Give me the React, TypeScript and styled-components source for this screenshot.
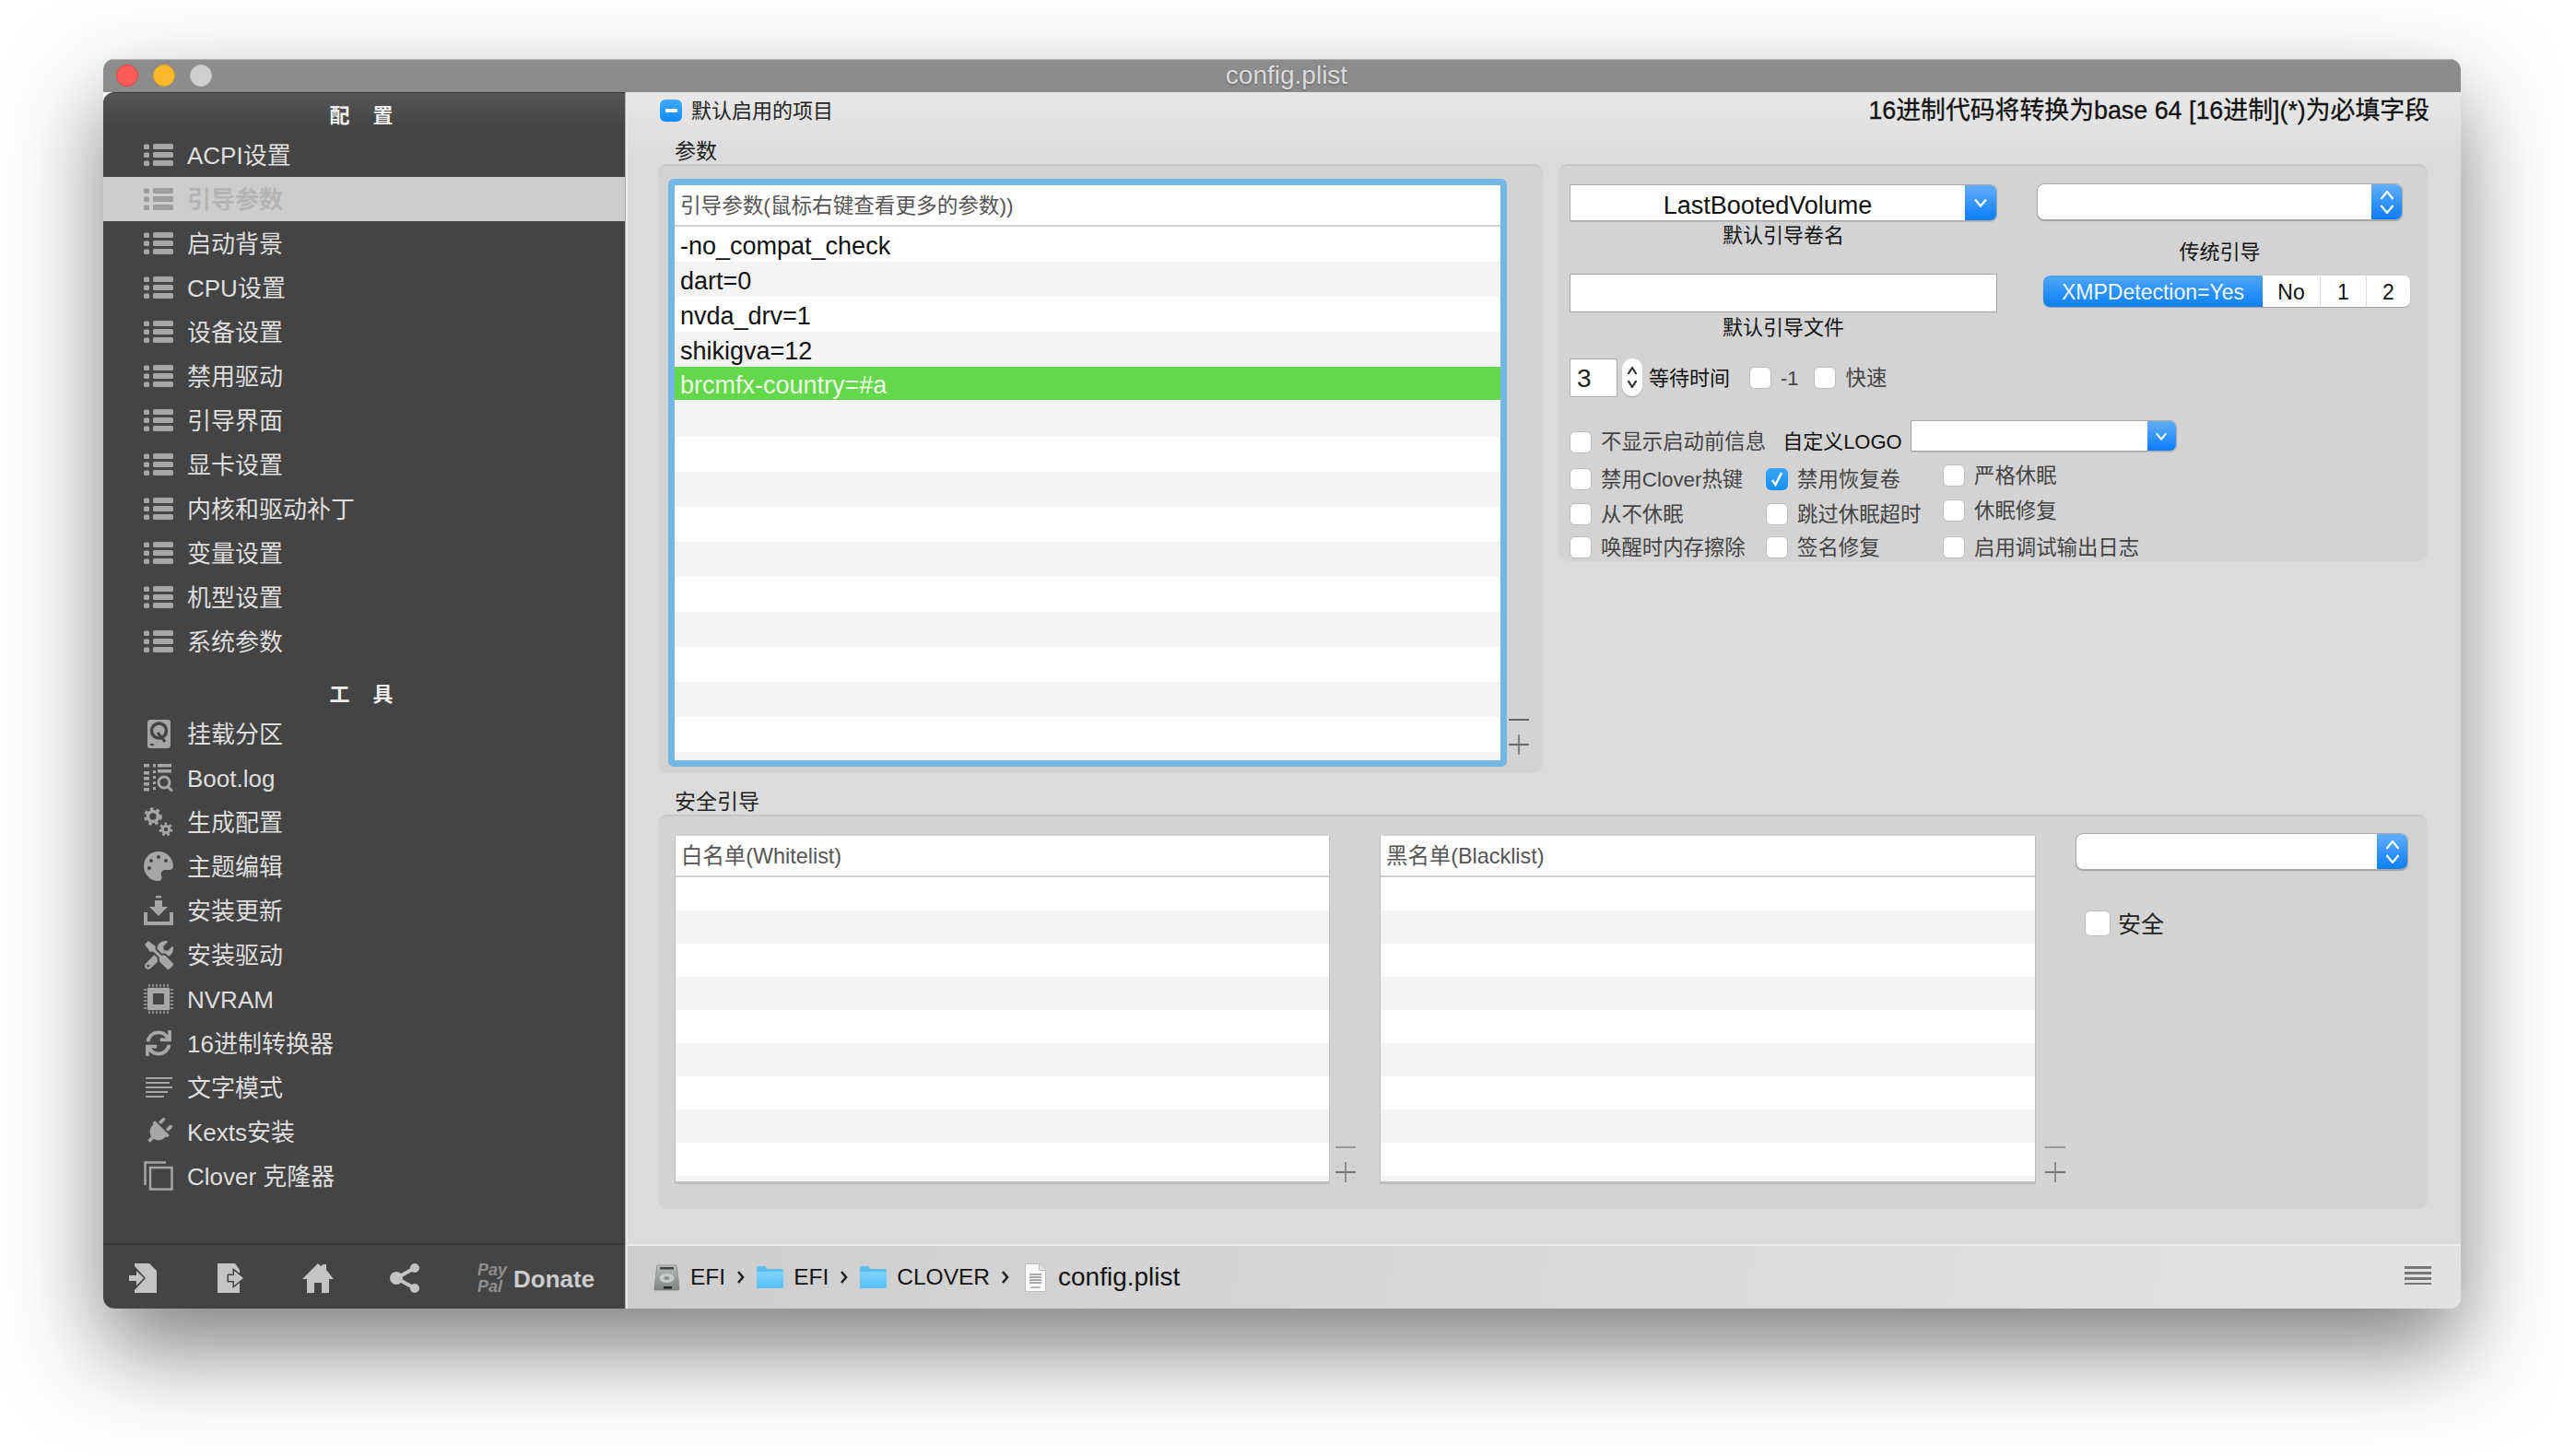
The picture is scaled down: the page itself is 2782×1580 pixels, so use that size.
import React from 'react';
import styled, { createGlobalStyle } from 'styled-components';
import { FaPalette, FaTools, FaSync, FaPlug } from 'react-icons/fa';

const FONT = `"Liberation Sans", "Noto Sans CJK SC", sans-serif`;
const ICON = '#a6a6a6';

const Global = createGlobalStyle`
  html, body { margin: 0; padding: 0; background: #fff; }
  body { font-family: ${FONT}; width: 2782px; height: 1580px; overflow: hidden; }
  * { box-sizing: border-box; }
`;

const Page = styled.div`
  width: 2782px;
  height: 1580px;
  padding: 64px 112px 160px;
`;
const Window = styled.div`
  width: 100%;
  height: 100%;
  display: flex;
  flex-direction: column;
  border-radius: 12px;
  overflow: hidden;
`;
const WindowShadow = styled.div`
  width: 100%;
  height: 100%;
  border-radius: 12px;
  box-shadow: 0 44px 100px rgba(0, 0, 0, 0.5);
`;
const TitleBar = styled.div`
  height: 36px;
  flex: none;
  display: grid;
  grid-template-columns: 1fr auto 1fr;
  align-items: center;
  background: #8c8c8c;
  box-shadow: inset 0 1px 0 #b4b4b4;
`;
const Lights = styled.div`
  display: flex;
  gap: 16px;
  padding-left: 14px;
`;
const Light = styled.span<{ $c: string; $b: string }>`
  width: 24px;
  height: 24px;
  border-radius: 50%;
  background: ${p => p.$c};
  border: 1px solid ${p => p.$b};
`;
const Title = styled.div`
  font-size: 28px;
  color: #dcdcdc;
  padding-left: 10px;
  text-shadow: 0 1px 2px rgba(0, 0, 0, 0.35);
`;
const Body = styled.div`
  flex: 1;
  display: flex;
  min-height: 0;
`;
const Sidebar = styled.aside`
  width: 566px;
  flex: none;
  display: flex;
  flex-direction: column;
  background: linear-gradient(#575757 0, #444 36px);
  border-top: 1px solid #3a3a3a;
  border-top-left-radius: 12px;
`;
const SideHeading = styled.div<{ $h: number; $top: number }>`
  height: ${p => p.$h}px;
  padding-top: ${p => p.$top}px;
  flex: none;
  display: flex;
  align-items: center;
  justify-content: center;
  gap: 25px;
  padding-right: 6px;
  font-size: 22px;
  font-weight: 700;
  line-height: 36px;
  color: #eee;
`;
const SideRow = styled.div<{ $active?: boolean }>`
  height: 48px;
  flex: none;
  display: flex;
  align-items: center;
  gap: 15px;
  padding-left: 44px;
  font-size: 26px;
  color: ${p => (p.$active ? '#b4b4b4' : '#dedede')};
  font-weight: ${p => (p.$active ? 700 : 400)};
  background: ${p => (p.$active ? '#cdcdcd' : 'transparent')};
`;
const RowText = styled.span`
  line-height: 36px;
  margin-top: 2px;
`;
const IconSlot = styled.span`
  width: 32px;
  height: 32px;
  flex: none;
  display: flex;
  align-items: center;
  justify-content: center;
  color: ${ICON};
  svg { display: block; }
`;
const Plug = styled(FaPlug)`
  transform: rotate(45deg);
`;
const Spacer = styled.div`
  flex: 1;
`;
const SideFooter = styled.div`
  height: 71px;
  flex: none;
  display: flex;
  align-items: center;
  padding: 3px 0 0 28px;
  border-top: 2px solid #383838;
  color: #c4c4c4;
`;
const FootIcon = styled.svg<{ $gap: number }>`
  display: block;
  margin-right: ${p => p.$gap}px;
  fill: #c4c4c4;
`;
const PayPal = styled.div`
  width: 39px;
  display: flex;
  flex-direction: column;
  gap: 1px;
  font-size: 18px;
  line-height: 17px;
  font-weight: 700;
  font-style: italic;
  color: #8f8f8f;
`;
const Donate = styled.div`
  font-size: 26px;
  font-weight: 700;
  color: #cccccc;
  padding-top: 2px;
`;
const Divider = styled.div`
  width: 3px;
  flex: none;
  background: #e8e8e8;
  border-left: 1px solid #aaa;
`;
const Main = styled.main`
  flex: 1;
  min-width: 0;
  display: flex;
  flex-direction: column;
  background: linear-gradient(#e8e8e8 0, #dbdbdb 70px);
`;
const Content = styled.div`
  flex: 1;
  padding: 0 36px 0 33px;
  min-height: 0;
`;
const TopRow = styled.div`
  height: 40px;
  display: flex;
  align-items: center;
  justify-content: space-between;
`;
const DefaultToggle = styled.div`
  display: flex;
  align-items: center;
  gap: 10px;
  padding-left: 2px;
  font-size: 22px;
  color: #222;
`;
const ToggleText = styled.span`
  margin-top: -4px;
`;
const BlueMinus = styled.span`
  width: 24px;
  height: 24px;
  border-radius: 6px;
  background: linear-gradient(#3eaaf8, #0f8cf8);
  display: flex;
  align-items: center;
  justify-content: center;
  &::before {
    content: '';
    width: 13px;
    height: 4px;
    background: #fff;
    border-radius: 1px;
  }
`;
const Notice = styled.div`
  font-size: 26.85px;
  color: #111;
  -webkit-text-stroke: 0.3px #111;
  margin: -5px -2px 0 0;
`;
const SectionTitle = styled.div<{ $h: number }>`
  height: ${p => p.$h}px;
  display: flex;
  align-items: flex-end;
  padding-left: 18px;
  font-size: 23px;
  line-height: 28px;
  color: #222;
`;
const PanelRow = styled.div`
  display: flex;
  align-items: flex-start;
  gap: 17px;
`;
const Panel = styled.section<{ $w: number | string; $h: number }>`
  width: ${p => (typeof p.$w === 'number' ? `${p.$w}px` : p.$w)};
  height: ${p => p.$h}px;
  flex: none;
  background: #d3d3d3;
  border-top: 2px solid #c6c6c6;
  border-radius: 10px;
`;
const ArgsInner = styled.div`
  display: flex;
  padding: 14px 0 0 11px;
`;
const ListFrame = styled.div<{ $w: number; $h: number; $focus?: boolean }>`
  width: ${p => p.$w}px;
  height: ${p => p.$h}px;
  flex: none;
  display: flex;
  flex-direction: column;
  overflow: hidden;
  background: #fff;
  ${p =>
    p.$focus
      ? `border: 7px solid #74b6e4; border-radius: 6px; box-shadow: inset 0 -1px 0 #bbb;`
      : `border: solid #bcbcbc; border-width: 0 1px 3px 1px;`}
`;
const ListHead = styled.div<{ $fs: number }>`
  height: 45px;
  flex: none;
  display: flex;
  align-items: center;
  padding: 0 0 3px 6px;
  font-size: ${p => p.$fs}px;
  color: #555;
  background: #fff;
  border-bottom: 2px solid #d0d0d0;
`;
const Rows = styled.div<{ $rowH: number }>`
  flex: 1;
  overflow: hidden;
  > div {
    height: ${p => p.$rowH}px;
  }
  > div:nth-child(even) {
    background: #f4f4f4;
  }
`;
const Row = styled.div<{ $selected?: boolean }>`
  display: flex;
  align-items: center;
  padding: 5px 0 0 6px;
  font-size: 27px;
  color: #111;
  ${p =>
    p.$selected
      ? `&&{background: linear-gradient(#62d84a 36px, #f4f4f4 36px);} color: #eefbe9; padding-top: 3px;`
      : ''}
`;
const SideControls = styled.div<{ $ml: number; $mr?: number; $pb: number; $minus: string; $gap: number }>`
  width: 22px;
  flex: none;
  margin-left: ${p => p.$ml}px;
  margin-right: ${p => p.$mr || 0}px;
  display: flex;
  flex-direction: column;
  justify-content: flex-end;
  padding-bottom: ${p => p.$pb}px;
  gap: ${p => p.$gap}px;
  &::before {
    content: '';
    height: 2px;
    background: ${p => p.$minus};
  }
  svg { display: block; }
`;
const OptionsInner = styled.div`
  padding: 20px 0 0 12px;
`;
const TwoCols = styled.div`
  display: flex;
`;
const ColLeft = styled.div`
  width: 464px;
  display: flex;
  flex-direction: column;
`;
const ColRight = styled.div`
  width: 405px;
  margin-left: 43px;
  margin-top: -1px;
  display: flex;
  flex-direction: column;
`;
const FieldLabel = styled.div<{ $mt: number; $w?: number }>`
  height: 30px;
  line-height: 30px;
  margin-top: ${p => p.$mt}px;
  text-align: center;
  width: ${p => (p.$w ? `${p.$w}px` : 'auto')};
  font-size: 22px;
  color: #111;
`;
const SelectBox = styled.div<{ $w: number; $h: number; $round?: boolean }>`
  width: ${p => p.$w}px;
  height: ${p => p.$h}px;
  flex: none;
  display: flex;
  background: #fff;
  border: 1px solid #a8a8a8;
  border-radius: ${p => (p.$round ? '8px' : '0 7px 7px 0')};
  box-shadow: ${p => (p.$round ? '0 1px 1px rgba(0,0,0,.25)' : '0 1px 0 rgba(0,0,0,.1)')};
  overflow: hidden;
`;
const SelectValue = styled.div`
  flex: 1;
  display: flex;
  align-items: center;
  justify-content: center;
  padding-top: 6px;
  font-size: 27px;
  color: #111;
`;
const SelectArrow = styled.div<{ $w: number }>`
  width: ${p => p.$w}px;
  flex: none;
  display: flex;
  align-items: center;
  justify-content: center;
  background: linear-gradient(#62aef8, #0a7dfe);
`;
const TextField = styled.div<{ $mt: number }>`
  height: 42px;
  margin-top: ${p => p.$mt}px;
  background: #fff;
  border: 1px solid #a4a4a4;
`;
const Segmented = styled.div`
  width: 398px;
  height: 34px;
  margin: 10px 0 0 7px;
  display: flex;
  border-radius: 7px;
  overflow: hidden;
  background: #fff;
  box-shadow: 0 1px 1px rgba(0, 0, 0, 0.25);
`;
const Seg = styled.div<{ $w: number; $on?: boolean }>`
  width: ${p => p.$w}px;
  flex: none;
  display: flex;
  align-items: center;
  justify-content: center;
  padding-top: 2px;
  font-size: 23px;
  color: ${p => (p.$on ? '#f2f8ff' : '#111')};
  background: ${p => (p.$on ? 'linear-gradient(#4fa6f8, #0c7ffc)' : 'transparent')};
  border-right: ${p => (p.$on ? 'none' : '1px solid #dcdcdc')};
  &:last-child { border-right: none; }
`;
const WaitRow = styled.div`
  height: 42px;
  margin-top: 18px;
  display: flex;
  align-items: center;
`;
const NumberField = styled.div`
  width: 52px;
  height: 42px;
  flex: none;
  display: flex;
  align-items: center;
  padding: 2px 0 0 7px;
  font-size: 28px;
  color: #222;
  background: #fff;
  border: 1px solid #adadad;
`;
const Stepper = styled.div`
  width: 22px;
  height: 41px;
  flex: none;
  margin: -2px 7px 0 5px;
  border-radius: 11px;
  background: #fff;
  box-shadow: 0 1px 1px rgba(0, 0, 0, 0.25);
  display: flex;
  align-items: center;
  justify-content: center;
`;
const Plain = styled.span<{ $ml?: number; $mr?: number; $c?: string; $fs?: number }>`
  margin-left: ${p => p.$ml || 0}px;
  margin-right: ${p => p.$mr || 0}px;
  white-space: nowrap;
  font-size: ${p => p.$fs || 22.4}px;
  line-height: 24px;
  padding-top: 2px;
  color: ${p => p.$c || '#111'};
`;
const Check = styled.span<{ $on?: boolean; $w?: number; $h?: number; $ml?: number }>`
  width: ${p => p.$w || 24}px;
  height: ${p => p.$h || 24}px;
  flex: none;
  margin-left: ${p => p.$ml || 0}px;
  border-radius: 6px;
  display: flex;
  align-items: center;
  justify-content: center;
  background: ${p => (p.$on ? 'linear-gradient(#37a4f8, #1590f8)' : '#fff')};
  border: ${p => (p.$on ? 'none' : '1px solid #bdbdbd')};
`;
const LogoRow = styled.div`
  height: 36px;
  margin-top: 25px;
  display: flex;
  align-items: flex-end;
`;
const LogoSelect = styled.div`
  align-self: flex-start;
  margin-left: 9px;
`;
const Options = styled.div`
  display: flex;
`;
const OptionCol = styled.div<{ $w: number }>`
  width: ${p => p.$w}px;
  flex: none;
`;
const Option = styled.div<{ $mt: number }>`
  display: flex;
  align-items: center;
  gap: 10px;
  height: 24px;
  margin-top: ${p => p.$mt}px;
`;
const SecureInner = styled.div`
  display: flex;
  padding: 21px 0 0 18px;
`;
const SecureSide = styled.div`
  margin-top: -3px;
  display: flex;
  flex-direction: column;
`;
const SecureCheck = styled.div`
  display: flex;
  align-items: center;
  gap: 8px;
  margin: 44px 0 0 10px;
`;
const StatusBar = styled.footer`
  height: 70px;
  flex: none;
  display: flex;
  align-items: center;
  padding: 0 32px 0 28px;
  border-top: 2px solid #ececec;
  background: linear-gradient(100deg, #cdcdcd 0, #d9d9d9 50%, #e2e2e2 100%);
`;
const Crumb = styled.div<{ $fs: number; $gap: number }>`
  display: flex;
  align-items: center;
  gap: ${p => p.$gap}px;
  font-size: ${p => p.$fs}px;
  line-height: 36px;
  color: #151515;
  svg { display: block; }
`;
const CrumbSep = styled.svg<{ $mr: number }>`
  display: block;
  margin: 0 ${p => p.$mr}px 0 12px;
  flex: none;
`;
const MenuLines = styled.div`
  margin-left: auto;
  width: 29px;
  height: 20px;
  margin-top: -4px;
  background: repeating-linear-gradient(#777 0 3px, transparent 3px 6px);
`;

const ListIcon = ({ c = ICON }: { c?: string }) => (
  <svg width="32" height="24" viewBox="0 0 32 24" fill={c}>
    {[0, 9, 18].map(y => (
      <React.Fragment key={y}>
        <rect x="0" y={y + 0.5} width="6" height="5.5" rx="1.5" />
        <rect x="10" y={y} width="22" height="6" rx="1.5" />
      </React.Fragment>
    ))}
  </svg>
);

const DiskIcon = () => (
  <svg width="25" height="31" viewBox="0 0 25 31">
    <rect width="25" height="31" rx="3" fill={ICON} />
    <circle cx="12.5" cy="12" r="8" fill="none" stroke="#444" strokeWidth="3.5" />
    <path d="M11 14l8 10" stroke="#444" strokeWidth="3" />
    <rect x="3" y="26" width="4" height="2" fill="#444" />
  </svg>
);
const LogIcon = () => (
  <svg width="32" height="32" viewBox="0 0 32 32" fill={ICON}>
    {[1, 9, 15, 21, 27].map(y => <rect key={y} x="0" y={y} width="6" height="3.5" />)}
    {[14, 20, 26].map(y => <rect key={y} x="10" y={y} width="3" height="3" />)}
    <rect x="10" y="1" width="3" height="3.5" />
    <rect x="10" y="8" width="3" height="3" />
    <rect x="15" y="1" width="15" height="3.5" />
    <rect x="15" y="7" width="15" height="3.5" />
    <circle cx="22" cy="21" r="6" fill="none" stroke={ICON} strokeWidth="3" />
    <path d="M26 25.5l5 5" stroke={ICON} strokeWidth="3" />
  </svg>
);
const Gear = ({ cx, cy, r, w, dash }: { cx: number; cy: number; r: number; w: number; dash: number }) => (
  <g fill="none" stroke={ICON}>
    <circle cx={cx} cy={cy} r={r} strokeWidth={w} />
    <circle cx={cx} cy={cy} r={r + w * 0.8} strokeWidth={w * 0.8} strokeDasharray={`${dash} ${dash}`} />
  </g>
);
const CogsIcon = () => (
  <svg width="32" height="32" viewBox="0 0 32 32">
    <Gear cx={10} cy={10} r={5.5} w={3.6} dash={3.6} />
    <Gear cx={24} cy={24} r={3.8} w={3} dash={2.7} />
  </svg>
);
const DownloadIcon = () => (
  <svg width="32" height="32" viewBox="0 0 32 32" fill={ICON}>
    <rect x="13" y="0" width="6" height="2.5" />
    <path d="M12 5h8v7h6L16 22 6 12h6z" />
    <path d="M0 18h4v10h24V18h4v14H0z" />
  </svg>
);
const ChipIcon = () => (
  <svg width="32" height="32" viewBox="0 0 32 32" fill={ICON}>
    <path fillRule="evenodd" d="M4 4h24v24H4zM10 10v12h12V10z" />
    {[6, 10, 14, 18, 22, 26].map(p => (
      <React.Fragment key={p}>
        <rect x={p - 0.7} y="0" width="1.4" height="3.5" />
        <rect x={p - 0.7} y="28.5" width="1.4" height="3.5" />
        <rect x="0" y={p - 0.7} width="3.5" height="1.4" />
        <rect x="28.5" y={p - 0.7} width="3.5" height="1.4" />
      </React.Fragment>
    ))}
  </svg>
);
const TextIcon = () => (
  <svg width="30" height="24" viewBox="0 0 30 24" fill={ICON}>
    <rect x="1" y="1" width="29" height="2" />
    <rect x="1" y="6" width="26" height="2" />
    <rect x="1" y="11" width="29" height="2" />
    <rect x="1" y="16" width="24" height="2" />
    <rect x="1" y="21" width="20" height="2" />
  </svg>
);
const CloneIcon = () => (
  <svg width="32" height="32" viewBox="0 0 32 32" fill="none" stroke={ICON} strokeWidth="2.5">
    <path d="M24 1.5H1.5V26" />
    <rect x="7" y="7" width="23.5" height="23.5" />
  </svg>
);
const Chevron = ({ w = 16, h = 10 }: { w?: number; h?: number }) => (
  <svg width={w} height={h} viewBox="0 0 16 10" fill="none" stroke="#fff" strokeWidth="2.4" style={{ display: 'block' }}>
    <path d="M2 1.5l6 7 6-7" />
  </svg>
);
const UpDown = ({ c = '#fff', w = 16, h = 10 }: { c?: string; w?: number; h?: number }) => (
  <svg width={w} height={h * 2 + 5} viewBox={`0 0 ${w} ${h * 2 + 5}`} fill="none" stroke={c} strokeWidth="2.2">
    <path d={`M1.5 ${h - 1}l${w / 2 - 1.5} -${h - 2} ${w / 2 - 1.5} ${h - 2}`} />
    <path d={`M1.5 ${h + 6}l${w / 2 - 1.5} ${h - 2} ${w / 2 - 1.5} -${h - 2}`} />
  </svg>
);
const PlusIcon = ({ c }: { c: string }) => (
  <svg width="22" height="22" viewBox="0 0 22 22" fill={c}>
    <rect x="0" y="10" width="22" height="2" />
    <rect x="10.25" y="0" width="1.5" height="22" />
  </svg>
);
const CheckMark = () => (
  <svg width="16" height="18" viewBox="0 0 16 18" fill="none" stroke="#fff" strokeWidth="2.6">
    <path d="M3 10l3.5 5L13 2" />
  </svg>
);

const DriveIcon = () => (
  <svg width="29" height="29" viewBox="0 0 29 29">
    <defs>
      <linearGradient id="drv" x1="0" y1="0" x2="0" y2="1">
        <stop offset="0" stopColor="#b8bcbc" />
        <stop offset="1" stopColor="#7f8282" />
      </linearGradient>
    </defs>
    <path d="M4 1h21l3 24v2a1 1 0 0 1-1 1H2a1 1 0 0 1-1-1v-2z" fill="url(#drv)" stroke="#777" strokeWidth=".6" />
    <rect x="7" y="3" width="15" height="2.5" fill="#444" />
    <ellipse cx="14.5" cy="15" rx="8" ry="5" fill="#c9cccc" />
    <ellipse cx="14.5" cy="15" rx="3" ry="2" fill="#8a8d8d" />
    <rect x="11" y="24" width="9" height="2.5" fill="#222" />
  </svg>
);
const FolderIcon = () => (
  <svg width="29" height="24" viewBox="0 0 29 24">
    <defs>
      <linearGradient id="fld" x1="0" y1="0" x2="0" y2="1">
        <stop offset="0" stopColor="#7ed2fb" />
        <stop offset="1" stopColor="#56c0f8" />
      </linearGradient>
    </defs>
    <path d="M0 2a2 2 0 0 1 2-2h7l3 3h15a2 2 0 0 1 2 2v17a2 2 0 0 1-2 2H2a2 2 0 0 1-2-2z" fill="#5fbdec" />
    <path d="M0 6h29v16a1.5 1.5 0 0 1-1.5 1.5h-26A1.5 1.5 0 0 1 0 22z" fill="url(#fld)" />
  </svg>
);
const PlistIcon = () => (
  <svg width="23" height="31" viewBox="0 0 23 31">
    <path d="M.5.5h15l7 7v23H.5z" fill="#fbfbfb" stroke="#bdbdbd" />
    <path d="M15.5.5v7h7" fill="#e4e4e4" stroke="#bdbdbd" />
    {[11, 14, 17, 20].map(y => <rect key={y} x="5" y={y} width="13" height="2" fill="#a8a8a8" />)}
    <rect x="6" y="25" width="11" height="2" fill="#bbb" />
  </svg>
);
const Sep = ({ mr = 12 }: { mr?: number }) => (
  <CrumbSep $mr={mr} width="10" height="16" viewBox="0 0 10 16" fill="none" stroke="#222" strokeWidth="2.6">
    <path d="M2 2l5 6-5 6" />
  </CrumbSep>
);

const CONFIG = ['ACPI设置', '引导参数', '启动背景', 'CPU设置', '设备设置', '禁用驱动', '引导界面', '显卡设置', '内核和驱动补丁', '变量设置', '机型设置', '系统参数'];
const TOOLS: [React.ReactNode, string][] = [
  [<DiskIcon />, '挂载分区'],
  [<LogIcon />, 'Boot.log'],
  [<CogsIcon />, '生成配置'],
  [<FaPalette size={32} />, '主题编辑'],
  [<DownloadIcon />, '安装更新'],
  [<FaTools size={31} />, '安装驱动'],
  [<ChipIcon />, 'NVRAM'],
  [<FaSync size={28} />, '16进制转换器'],
  [<TextIcon />, '文字模式'],
  [<Plug size={30} />, 'Kexts安装'],
  [<CloneIcon />, 'Clover 克隆器'],
];
const ARGS = ['-no_compat_check', 'dart=0', 'nvda_drv=1', 'shikigva=12', 'brcmfx-country=#a'];

const fill = (n: number) => Array.from({ length: n }, (_, i) => i);

const Opt = ({ t, mt, on }: { t: string; mt: number; on?: boolean }) => (
  <Option $mt={mt}>
    <Check $on={on}>{on && <CheckMark />}</Check>
    <Plain $c="#444">{t}</Plain>
  </Option>
);

export default function App() {
  return (
    <Page>
      <Global />
      <WindowShadow>
        <Window>
          <TitleBar>
            <Lights>
              <Light $c="#fc5b57" $b="#e2463f" />
              <Light $c="#fdb92e" $b="#e0a028" />
              <Light $c="#cfcfcf" $b="#c4c4c4" />
            </Lights>
            <Title>config.plist</Title>
            <span />
          </TitleBar>
          <Body>
            <Sidebar>
              <SideHeading $h={43} $top={7}><span>配</span><span>置</span></SideHeading>
              {CONFIG.map((t, i) => (
                <SideRow key={t} $active={i === 1}>
                  <IconSlot><ListIcon c={i === 1 ? '#9d9d9d' : ICON} /></IconSlot>
                  <RowText>{t}</RowText>
                </SideRow>
              ))}
              <SideHeading $h={52} $top={16}><span>工</span><span>具</span></SideHeading>
              {TOOLS.map(([icon, t]) => (
                <SideRow key={t}>
                  <IconSlot>{icon}</IconSlot>
                  <RowText>{t}</RowText>
                </SideRow>
              ))}
              <Spacer />
              <SideFooter>
                <FootIcon $gap={66} width="30" height="32" viewBox="0 0 30 32">
                  <path d="M6 0h16l8 8v24H6v-3l12-13L6 3z" />
                  <path d="M0 13h8V8l8 8-8 8v-5H0z" />
                </FootIcon>
                <FootIcon $gap={62} width="30" height="32" viewBox="0 0 30 32">
                  <path d="M0 0h19l5 7v25H0z" />
                  <path d="M12 13h6V8l10 8-10 8v-5h-6z" stroke="#444" strokeWidth="3" paintOrder="stroke" />
                </FootIcon>
                <FootIcon $gap={61} width="34" height="32" viewBox="0 0 34 32">
                  <path d="M17 0l3 3 3-2h3v6l8 10h-5v15h-8V21h-8v11H5V17H0z" />
                </FootIcon>
                <FootIcon $gap={62} width="33" height="32" viewBox="0 0 33 32">
                  <circle cx="7" cy="16" r="7" />
                  <circle cx="27" cy="5" r="5" />
                  <circle cx="27" cy="27" r="5" />
                  <path d="M7 16L27 5M7 16l20 11" stroke="#c4c4c4" strokeWidth="4" />
                </FootIcon>
                <PayPal><span>Pay</span><span>Pal</span></PayPal>
                <Donate>Donate</Donate>
              </SideFooter>
            </Sidebar>
            <Divider />
            <Main>
              <Content>
                <TopRow>
                  <DefaultToggle><BlueMinus /><ToggleText>默认启用的项目</ToggleText></DefaultToggle>
                  <Notice>16进制代码将转换为base 64 [16进制](*)为必填字段</Notice>
                </TopRow>
                <SectionTitle $h={38}>参数</SectionTitle>
                <PanelRow>
                  <Panel $w={960} $h={661}>
                    <ArgsInner>
                      <ListFrame $w={910} $h={638} $focus>
                        <ListHead $fs={22.6}>引导参数(鼠标右键查看更多的参数))</ListHead>
                        <Rows $rowH={38}>
                          {fill(16).map(i => (
                            <Row key={i} $selected={i === 4}>{ARGS[i] || ''}</Row>
                          ))}
                        </Rows>
                      </ListFrame>
                      <SideControls $ml={2} $pb={13} $minus="#666" $gap={15}>
                        <PlusIcon c="#666" />
                      </SideControls>
                    </ArgsInner>
                  </Panel>
                  <Panel $w={943} $h={431}>
                    <OptionsInner>
                      <TwoCols>
                        <ColLeft>
                          <SelectBox $w={464} $h={40}>
                            <SelectValue>LastBootedVolume</SelectValue>
                            <SelectArrow $w={34}><Chevron /></SelectArrow>
                          </SelectBox>
                          <FieldLabel $mt={1}>默认引导卷名</FieldLabel>
                          <TextField $mt={26} />
                          <FieldLabel $mt={2}>默认引导文件</FieldLabel>
                        </ColLeft>
                        <ColRight>
                          <SelectBox $w={397} $h={40} $round>
                            <SelectValue />
                            <SelectArrow $w={33}><UpDown /></SelectArrow>
                          </SelectBox>
                          <FieldLabel $mt={20} $w={397}>传统引导</FieldLabel>
                          <Segmented>
                            <Seg $w={238} $on>XMPDetection=Yes</Seg>
                            <Seg $w={63}>No</Seg>
                            <Seg $w={50}>1</Seg>
                            <Seg $w={47}>2</Seg>
                          </Segmented>
                        </ColRight>
                      </TwoCols>
                      <WaitRow>
                        <NumberField>3</NumberField>
                        <Stepper><UpDown c="#333" w={12} h={9} /></Stepper>
                        <Plain $fs={22}>等待时间</Plain>
                        <Check $ml={21} />
                        <Plain $ml={10} $c="#444" $fs={22}>-1</Plain>
                        <Check $ml={16} />
                        <Plain $ml={11} $c="#444">快速</Plain>
                      </WaitRow>
                      <LogoRow>
                        <Check />
                        <Plain $ml={10} $c="#444">不显示启动前信息</Plain>
                        <Plain $ml={18} $fs={22}>自定义LOGO</Plain>
                        <LogoSelect>
                          <SelectBox $w={289} $h={34}>
                            <SelectValue />
                            <SelectArrow $w={31}><Chevron w={14} h={9} /></SelectArrow>
                          </SelectBox>
                        </LogoSelect>
                      </LogoRow>
                      <Options>
                        <OptionCol $w={213}>
                          <Opt t="禁用Clover热键" mt={16} />
                          <Opt t="从不休眠" mt={14} />
                          <Opt t="唤醒时内存擦除" mt={12} />
                        </OptionCol>
                        <OptionCol $w={192}>
                          <Opt t="禁用恢复卷" mt={16} on />
                          <Opt t="跳过休眠超时" mt={14} />
                          <Opt t="签名修复" mt={12} />
                        </OptionCol>
                        <OptionCol $w={300}>
                          <Opt t="严格休眠" mt={12} />
                          <Opt t="休眠修复" mt={14} />
                          <Opt t="启用调试输出日志" mt={16} />
                        </OptionCol>
                      </Options>
                    </OptionsInner>
                  </Panel>
                </PanelRow>
                <SectionTitle $h={45}>安全引导</SectionTitle>
                <Panel $w="100%" $h={428}>
                  <SecureInner>
                    <ListFrame $w={711} $h={378}>
                      <ListHead $fs={23.4}>白名单(Whitelist)</ListHead>
                      <Rows $rowH={36}>
                        {fill(10).map(i => <Row key={i} />)}
                      </Rows>
                    </ListFrame>
                    <SideControls $ml={6} $mr={26} $pb={2} $minus="#9a9a9a" $gap={15}>
                      <PlusIcon c="#777" />
                    </SideControls>
                    <ListFrame $w={712} $h={378}>
                      <ListHead $fs={23.4}>黑名单(Blacklist)</ListHead>
                      <Rows $rowH={36}>
                        {fill(10).map(i => <Row key={i} />)}
                      </Rows>
                    </ListFrame>
                    <SideControls $ml={10} $mr={11} $pb={2} $minus="#9a9a9a" $gap={15}>
                      <PlusIcon c="#777" />
                    </SideControls>
                    <SecureSide>
                      <SelectBox $w={361} $h={40} $round>
                        <SelectValue />
                        <SelectArrow $w={33}><UpDown /></SelectArrow>
                      </SelectBox>
                      <SecureCheck>
                        <Check $w={28} $h={28} />
                        <Plain $fs={25} $c="#222">安全</Plain>
                      </SecureCheck>
                    </SecureSide>
                  </SecureInner>
                </Panel>
              </Content>
              <StatusBar>
                <Crumb $fs={24.5} $gap={11}><DriveIcon />EFI</Crumb>
                <Sep />
                <Crumb $fs={24.5} $gap={11}><FolderIcon />EFI</Crumb>
                <Sep />
                <Crumb $fs={24.5} $gap={11}><FolderIcon />CLOVER</Crumb>
                <Sep mr={16} />
                <Crumb $fs={28} $gap={13}><PlistIcon />config.plist</Crumb>
                <MenuLines />
              </StatusBar>
            </Main>
          </Body>
        </Window>
      </WindowShadow>
    </Page>
  );
}
